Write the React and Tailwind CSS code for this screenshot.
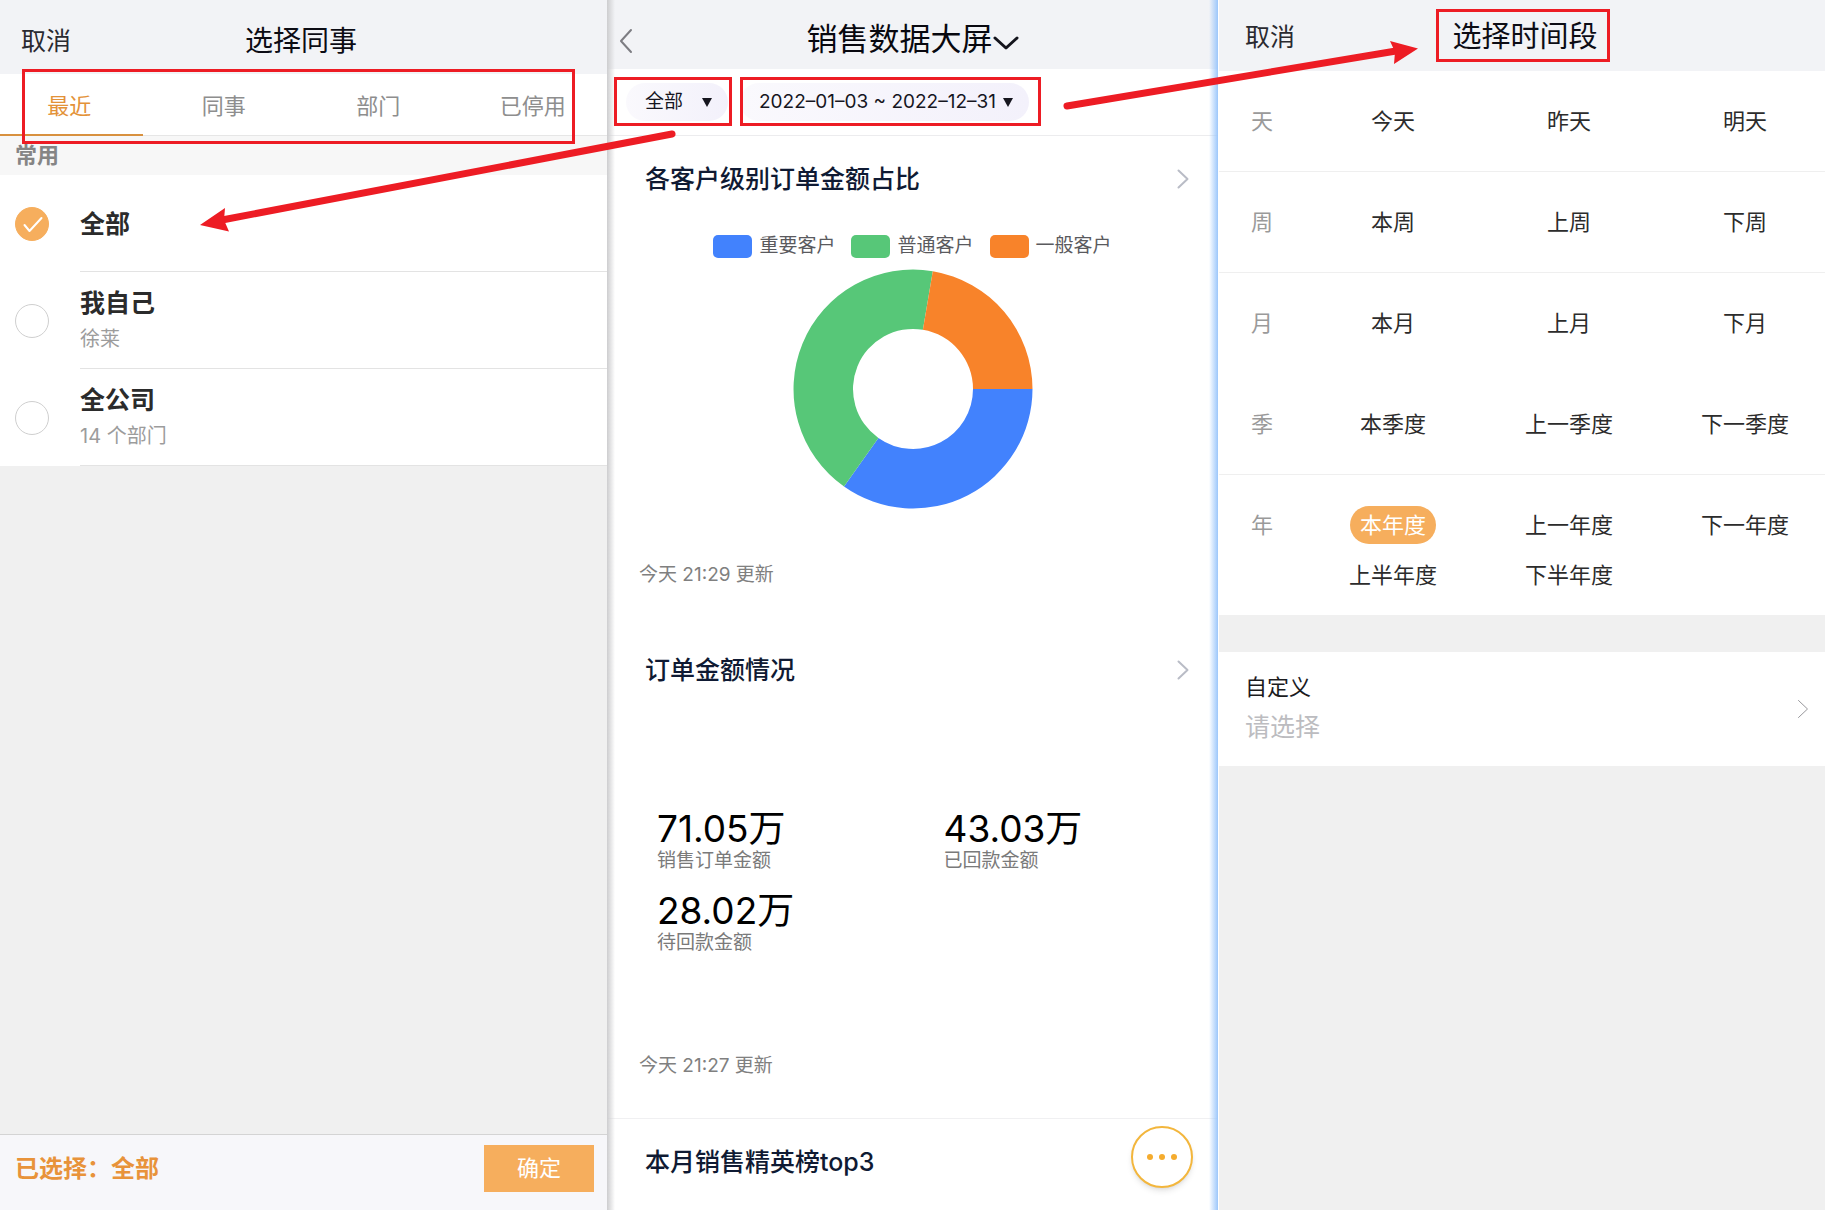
import { useState } from 'react';

const tabs = ['最近', '同事', '部门', '已停用'];

const people = [
  { id: 'all', name: '全部' },
  { id: 'me', name: '我自己', desc: '徐莱' },
  { id: 'company', name: '全公司', desc: '14 个部门' },
];

const legend = [
  { name: '重要客户', color: 'bg-[#4282fd]' },
  { name: '普通客户', color: 'bg-[#57c778]' },
  { name: '一般客户', color: 'bg-[#f8832a]' },
];

const stats = [
  { value: '71.05万', label: '销售订单金额' },
  { value: '43.03万', label: '已回款金额' },
  { value: '28.02万', label: '待回款金额' },
];

const periods = [
  { unit: '天', options: ['今天', '昨天', '明天'], line: true },
  { unit: '周', options: ['本周', '上周', '下周'], line: true },
  { unit: '月', options: ['本月', '上月', '下月'], line: false },
  { unit: '季', options: ['本季度', '上一季度', '下一季度'], line: true },
  { unit: '年', options: ['本年度', '上一年度', '下一年度', '上半年度', '下半年度'], line: false },
];

function ChevronRight({ className }) {
  return (
    <svg className={className} fill="none" stroke="currentColor" viewBox="0 0 12 20" aria-hidden="true">
      <path strokeLinecap="round" strokeLinejoin="round" d="M1.5 1.5L10.5 10l-9 8.5" />
    </svg>
  );
}

function Triangle({ className }) {
  return (
    <svg className={className} fill="#16161f" viewBox="0 0 10 9" aria-hidden="true">
      <path d="M0 0h10L5 9z" />
    </svg>
  );
}

// Marco rojo de anotación
function Mark({ className }) {
  return <span className={`absolute border-3 border-[#ed1c24] pointer-events-none z-10 ${className}`} />;
}

function ColleaguePicker() {
  const [tab, setTab] = useState('最近');
  const [selected, setSelected] = useState('all');
  const current = people.find((p) => p.id === selected);

  return (
    <section className="flex flex-col min-h-screen overflow-hidden bg-[#f0f0f0]">
      <header className="grid grid-cols-[1fr_auto_1fr] items-center h-[74px] pt-2 pl-[21px] pr-[26px] bg-[#f2f3f6]">
        <button className="justify-self-start text-[25px] leading-8 text-[#2a2a30]">取消</button>
        <h1 className="text-[28px] leading-9 text-[#0c0c14]">选择同事</h1>
      </header>

      <div className="relative bg-white">
        <nav className="grid grid-cols-4 h-[62px] -ml-2 -mr-[3px] border-b border-[#e6e6e6]">
          {tabs.map((t) => (
            <button
              key={t}
              onClick={() => setTab(t)}
              className={`relative pt-[2px] text-[22px] leading-8 ${t === tab ? 'text-[#e39238]' : 'text-[#8e8e8e]'}`}
            >
              {t}
              {t === tab && <span className="absolute left-0 right-1 -bottom-px h-[2px] bg-[#d8913f]" />}
            </button>
          ))}
        </nav>
        <Mark className="left-[22px] right-8 -top-[5px] -bottom-2" />
      </div>

      <h2 className="h-[39px] pl-[15px] bg-[#f7f7f7] text-[22px] leading-[39px] font-semibold text-[#858585]">常用</h2>

      <div className="bg-white">
        {people.map((p) => (
          <label key={p.id} className="flex items-center h-[97px] pl-[15px] cursor-pointer">
            <span className="relative w-[34px] h-[34px] shrink-0">
              <input
                type="radio"
                name="person"
                checked={selected === p.id}
                onChange={() => setSelected(p.id)}
                className="block appearance-none w-full h-full rounded-full border border-[#cfcfcf] bg-white checked:border-[#f6ae5d] checked:bg-[#f6ae5d]"
              />
              {selected === p.id && (
                <svg className="absolute inset-0 w-full h-full" fill="none" stroke="white" strokeWidth={2} viewBox="0 0 34 34" aria-hidden="true">
                  <path strokeLinecap="round" strokeLinejoin="round" d="M9.500 18l5 6L26.500 11" />
                </svg>
              )}
            </span>
            <span className="flex flex-col justify-center flex-1 h-full ml-[31px] pt-[2px] border-b border-[#e3e3e3]">
              <span className="text-[25px] leading-9 font-semibold text-[#2b2b2b]">{p.name}</span>
              {p.desc && <span className="text-[20px] leading-9 text-[#9c9c9c]">{p.desc}</span>}
            </span>
          </label>
        ))}
      </div>

      <footer className="flex items-center justify-between mt-auto h-[76px] pl-[15px] pr-[13px] pb-2 border-t border-[#d4d4d4] bg-[#f7f7fa]">
        <p className="text-[24px] leading-8 font-semibold text-[#e8933a]">已选择：{current.name}</p>
        <button className="w-[110px] h-[47px] bg-[#f6ae5d] text-[22px] text-white">确定</button>
      </footer>
    </section>
  );
}

function Donut() {
  return (
    <svg className="w-60 h-60 mx-auto" viewBox="-120 -120 240 240" role="img" aria-label="各客户级别订单金额占比">
      <path fill="#4282fd" d="M119.500 0A119.500 119.500 0 0 1 -69 97.600L-34.600 49A60 60 0 0 0 60 0z" />
      <path fill="#57c778" d="M-69 97.600A119.500 119.500 0 0 1 19.800 -117.800L9.900 -59.200A60 60 0 0 0 -34.600 49z" />
      <path fill="#f8832a" d="M19.800 -117.800A119.500 119.500 0 0 1 119.500 0L60 0A60 60 0 0 0 9.900 -59.200z" />
    </svg>
  );
}

function CardTitle({ children, arrow }) {
  return (
    <div className="flex items-center justify-between pt-[25px] pl-[38px] pr-[29px]">
      <h2 className="text-[25px] leading-9 font-medium text-[#0f1a33]">{children}</h2>
      {arrow && <ChevronRight className="w-3 h-5 stroke-2 text-[#b9bcc6]" />}
    </div>
  );
}

function Dashboard() {
  return (
    <section className="relative flex flex-col min-h-screen bg-white">
      <header className="relative flex items-center justify-center h-[69px] pt-2 bg-[#f2f3f6]">
        <button className="absolute left-3 top-7" aria-label="返回">
          <svg className="w-[14px] h-[26px]" fill="none" stroke="#7d7d82" strokeWidth={2} viewBox="0 0 14 26" aria-hidden="true">
            <path strokeLinecap="round" strokeLinejoin="round" d="M12 2L2 13l10 11" />
          </svg>
        </button>
        <button className="flex items-center text-[31px] leading-10 text-[#08080f]">
          销售数据大屏
          <svg className="w-[26px] h-[14px] mt-2" fill="none" stroke="#14141c" strokeWidth={3} viewBox="0 0 26 14" aria-hidden="true">
            <path strokeLinecap="round" strokeLinejoin="round" d="M2 2l11 10L24 2" />
          </svg>
        </button>
      </header>

      <div className="flex items-center gap-3 h-[67px] pl-[19px] border-b border-[#ececee]">
        <div className="relative flex items-center w-[102px] h-[38px] rounded-full bg-linear-to-r from-[#faf9fd] to-[#f3f1fb]">
          <select aria-label="人员" className="appearance-none w-full h-full pl-[19px] rounded-full text-[19px] text-[#16161f] outline-none">
            <option>全部</option>
            <option>我自己</option>
            <option>全公司</option>
          </select>
          <Triangle className="absolute right-4 w-[10px] h-[9px] pointer-events-none" />
          <Mark className="-left-3 -right-1 -top-[6px] -bottom-[5px]" />
        </div>
        <div className="relative">
          <button className="flex items-center gap-[7px] h-[38px] pl-[19px] pr-4 rounded-full bg-linear-to-r from-[#faf9fd] to-[#f3f1fb] text-[19px] text-[#16161f] whitespace-nowrap">
            2022–01–03 ~ 2022–12–31
            <Triangle className="w-[10px] h-[9px]" />
          </button>
          <Mark className="left-0 -right-3 -top-[6px] -bottom-[5px]" />
        </div>
      </div>

      <article className="flex flex-col h-[491px]">
        <CardTitle arrow>各客户级别订单金额占比</CardTitle>
        <ul className="flex justify-center gap-4 mt-[35px]">
          {legend.map((item) => (
            <li key={item.name} className="flex items-center gap-[7px] text-[19px] leading-7 text-[#5a5a5e]">
              <span className={`w-[39px] h-[23px] rounded-[5px] ${item.color}`} />
              {item.name}
            </li>
          ))}
        </ul>
        <div className="mt-[9px]">
          <Donut />
        </div>
        <p className="mt-auto mb-[38px] pl-8 text-[19px] leading-7 text-[#808080]">今天 21:29 更新</p>
      </article>

      <article className="flex flex-col h-[492px] border-b border-[#f0f0f2]">
        <CardTitle arrow>订单金额情况</CardTitle>
        <dl className="grid grid-cols-2 gap-y-[18px] mt-[120px] -mr-3 pl-[50px]">
          {stats.map((s) => (
            <div key={s.label} className="flex flex-col-reverse">
              <dt className="text-[19px] leading-[22px] text-[#7a7a7a]">{s.label}</dt>
              <dd className="text-[37px] leading-[42px] text-black">{s.value}</dd>
            </div>
          ))}
        </dl>
        <p className="mt-auto mb-[38px] pl-8 text-[19px] leading-7 text-[#808080]">今天 21:27 更新</p>
      </article>

      <article className="flex-1">
        <CardTitle>本月销售精英榜top3</CardTitle>
      </article>

      <button
        className="absolute right-[25px] bottom-[22px] flex items-center justify-center gap-[6px] w-[62px] h-[62px] rounded-full border-2 border-[#f3b63c] bg-white shadow-md"
        aria-label="更多"
      >
        <span className="w-[6px] h-[6px] rounded-full bg-[#f5ac2e]" />
        <span className="w-[6px] h-[6px] rounded-full bg-[#f5ac2e]" />
        <span className="w-[6px] h-[6px] rounded-full bg-[#f5ac2e]" />
      </button>

      {/* Bordes sombreados del panel */}
      <span className="absolute inset-y-0 left-0 w-2 bg-linear-to-r from-[#cdcdcf] to-transparent" />
      <span className="absolute inset-y-0 right-0 w-[9px] bg-linear-to-l from-[#9cc7fb] to-transparent" />
    </section>
  );
}

function PeriodPicker() {
  const [period, setPeriod] = useState('本年度');

  return (
    <section className="min-h-screen overflow-hidden border-l border-white bg-[#f0f0f0]">
      <header className="grid grid-cols-[1fr_auto_1fr] items-center h-[71px] pl-[26px] pr-6 bg-[#f2f3f6]">
        <button className="justify-self-start pt-[2px] text-[25px] leading-8 text-[#2a2a30]">取消</button>
        <div className="relative h-[53px] pl-4 pr-3">
          <h1 className="pt-[2px] text-[29px] leading-[51px] text-[#0c0c14]">选择时间段</h1>
          <Mark className="inset-0" />
        </div>
      </header>

      <div className="pb-[15px] bg-white">
        {periods.map((row) => (
          <div
            key={row.unit}
            className={`grid grid-cols-[86px_1fr_1fr_1fr] -mr-2 pt-[25px] ${row.unit === '年' ? '' : 'pb-[25px] border-b'} ${
              row.line ? 'border-[#efefef]' : 'border-white'
            }`}
          >
            <span className="row-span-2 text-center text-[22px] leading-[50px] text-[#9a9a9a]">{row.unit}</span>
            {row.options.map((o) => (
              <div key={o} className="flex items-center justify-center h-[50px]">
                <button
                  onClick={() => setPeriod(o)}
                  aria-pressed={o === period}
                  className={`h-[38px] px-[10px] rounded-full text-[22px] whitespace-nowrap ${
                    o === period ? 'bg-[#f6ae5d] text-white' : 'text-[#2c2c2c]'
                  }`}
                >
                  {o}
                </button>
              </div>
            ))}
          </div>
        ))}
      </div>

      <button className="flex items-center justify-between w-full h-[114px] mt-[37px] pl-[26px] pr-4 bg-white text-left">
        <span className="flex flex-col">
          <span className="text-[22px] leading-9 text-[#1c1c1e]">自定义</span>
          <span className="text-[25px] leading-[44px] text-[#bcbcc0]">请选择</span>
        </span>
        <ChevronRight className="w-3 h-5 text-[#98989c]" />
      </button>
    </section>
  );
}

export default function App() {
  return (
    <main className="relative grid grid-cols-[607fr_611fr_607fr] min-h-screen overflow-hidden bg-white font-[Inter,'Noto_Sans_CJK_SC',sans-serif]">
      <ColleaguePicker />
      <Dashboard />
      <PeriodPicker />

      {/* Flechas de anotación */}
      <svg className="absolute left-0 top-0 w-full pointer-events-none" fill="#ed1c24" viewBox="0 0 1825 300" aria-hidden="true">
        <path stroke="#ed1c24" strokeWidth={7} strokeLinecap="round" d="M672 134L222 220M1067 106L1396 51" />
        <path d="M200 225l25-17-1 12 5 11.500zM1418 48.500L1390 41l5 11-1 12z" />
      </svg>
    </main>
  );
}
